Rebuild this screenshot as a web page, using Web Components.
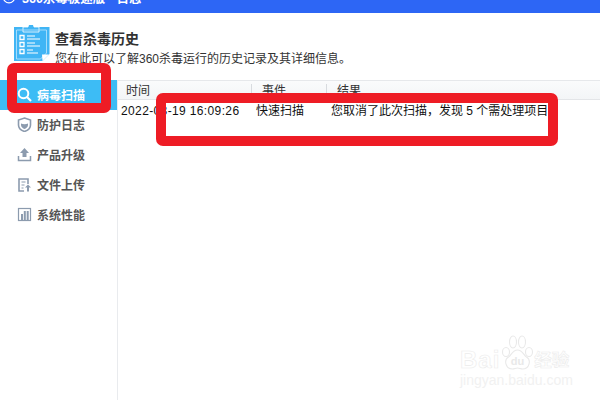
<!DOCTYPE html>
<html>
<head>
<meta charset="utf-8">
<style>
html, body { margin: 0; padding: 0; background: #fff; }
body { width: 600px; height: 400px; overflow: hidden; position: relative; font-family: "Liberation Sans", "Noto Sans CJK SC", sans-serif; }
</style>
</head>
<body>
<log-window>
  <title-bar slot="title">360杀毒极速版 - 日志</title-bar>
  <page-head slot="head"></page-head>
  <side-item slot="side" icon="search" active>病毒扫描</side-item>
  <side-item slot="side" icon="shield">防护日志</side-item>
  <side-item slot="side" icon="upload">产品升级</side-item>
  <side-item slot="side" icon="file">文件上传</side-item>
  <side-item slot="side" icon="chart">系统性能</side-item>
  <log-table slot="main"></log-table>
</log-window>
<red-mark style="left:7px;top:63px;width:104px;height:50px"></red-mark>
<red-mark style="left:156px;top:93px;width:402px;height:53px"></red-mark>
<baidu-mark></baidu-mark>

<script>
class LogWindow extends HTMLElement {
    constructor() {
        super();
        this.attachShadow({mode: 'open'}).innerHTML = `
<style>
:host { display: flex; flex-direction: column; width: 600px; height: 400px; }
.body { display: flex; flex: 1; min-height: 0; }
.side { width: 117px; border-right: 1px solid #e9ebee; flex: none; }
.main { flex: 1; min-width: 0; }
</style>
<slot name="title"></slot>
<slot name="head"></slot>
<div class="body">
    <div class="side"><slot name="side"></slot></div>
    <div class="main"><slot name="main"></slot></div>
</div>`;
    }
}

class TitleBar extends HTMLElement {
    constructor() {
        super();
        // the screenshot cuts the bar off, only the lower part of the caption shows
        this.attachShadow({mode: 'open'}).innerHTML = `
<style>
:host { display: block; height: 13px; background: #2d66f5; overflow: hidden; flex: none; }
.in { display: flex; align-items: center; gap: 6px; height: 20px; margin-top: -13px; padding-left: 2px; color: #fff; font-size: 12.5px; font-weight: bold; white-space: nowrap; }
svg { flex: none; }
</style>
<div class="in">
    <svg width="14" height="14" viewBox="0 0 14 14" fill="none" stroke="#fff" stroke-width="1.2"><circle cx="7" cy="7" r="5.8"/><path d="M4.500 7.500l2 2 3-4.500"/></svg>
    <span><slot></slot></span>
</div>`;
    }
}

class PageHead extends HTMLElement {
    constructor() {
        super();
        this.attachShadow({mode: 'open'}).innerHTML = `
<style>
:host { display: flex; height: 67px; flex: none; box-sizing: border-box; padding: 12px 0 0 13px; gap: 5px; }
.txt { padding-top: 5px; }
svg { flex: none; }
h1 { margin: 0; font-size: 14px; line-height: 18px; font-weight: bold; color: #333; }
p { margin: 3px 0 0; font-size: 12px; line-height: 16px; color: #333; white-space: nowrap; }
</style>
<svg width="37" height="37" viewBox="0 0 37 37">
    <path d="M1 2h35.500v27l-7 7H1z" fill="#40b5f5"/>
    <path d="M10 2h5a3 3 0 0 1 6 0h5v5H10z" fill="#40b5f5" stroke="#fff" stroke-width=".8"/>
    <path d="M3.500 5h30v23l-6 6h-24z" fill="none" stroke="#bfe6fc" stroke-width=".8"/>
    <path d="M7 10.500h4v4H7zM7 17.500h4v4H7zM7 24.500h4v4H7z" fill="none" stroke="#fff" stroke-width="1.300"/>
    <path d="M14 11h8M14 14h13M14 18h8M14 21h13M14 25h6M14 28h11" stroke="#fff" stroke-width="1.200"/>
    <path d="M29 29.500h7l-6.500 6.500z" fill="#fff"/>
</svg>
<div class="txt">
    <h1>查看杀毒历史</h1>
    <p>您在此可以了解360杀毒运行的历史记录及其详细信息。</p>
</div>`;
    }
}

const ICONS = {
    search: '<circle cx="6.500" cy="6.500" r="4.800" fill="none" stroke="#fff" stroke-width="2"/><path d="M10 10l4 4" stroke="#fff" stroke-width="2.200"/>',
    shield: '<path d="M7.500 1l6 2v5c0 3.500-3 5.500-6 6.500-3-1-6-3-6-6.500V3z" fill="none" stroke="#8c9bae" stroke-width="1.600"/><path d="M4 6.500c2 1 5 1 7 0v1.500c0 2-2 3.500-3.500 4-1.500-.5-3.500-2-3.500-4z" fill="#8c9bae"/>',
    upload: '<path d="M7.500 1l4.500 5h-2.500v4h-4V6H3z" fill="#8c9bae"/><path d="M1.500 9v4.500h12V9" fill="none" stroke="#8c9bae" stroke-width="1.500"/>',
    file: '<path d="M11 7V2H2v12h5" fill="none" stroke="#8c9bae" stroke-width="1.600"/><path d="M4.500 5h4M4.500 8h3M4.500 11h2" stroke="#8c9bae" stroke-width="1.200"/><path d="M11 7.500l3 3h-2v4h-2v-4H8z" fill="#8c9bae"/>',
    chart: '<rect x="1.500" y="1.500" width="12" height="12" fill="none" stroke="#8c9bae" stroke-width="1.200"/><path d="M4 7h2v6H4zM6.800 4h2v9h-2zM9.700 4h2v9h-2z" fill="#8c9bae"/>'
};

class SideItem extends HTMLElement {
    constructor() {
        super();
        this.attachShadow({mode: 'open'}).innerHTML = `
<style>
:host { display: flex; align-items: center; gap: 5px; height: 30px; box-sizing: border-box; padding: 0 0 2px 17px; font-size: 12px; font-weight: bold; color: #555; }
:host([active]) { background: #3dbcf5; color: #fff; }
svg { flex: none; }
</style>
<svg width="15" height="15" viewBox="0 0 15 15">${ICONS[this.getAttribute('icon')]}</svg>
<span><slot></slot></span>`;
    }
}

class LogTable extends HTMLElement {
    constructor() {
        super();
        this.attachShadow({mode: 'open'}).innerHTML = `
<style>
:host { display: block; font-size: 12px; color: #111; }
.row { display: grid; grid-template-columns: 134px 75px 1fr; white-space: nowrap; }
.head { height: 20px; box-sizing: border-box; background: linear-gradient(#fafbfc, #f3f5f7); border-top: 1px solid #e6e8eb; border-bottom: 1px solid #e3e5e8; color: #333; }
.head div { padding-left: 10px; border-right: 1px solid #d8dbdf; height: 14px; line-height: 15px; margin-top: 3px; box-sizing: border-box; }
.head div:first-child { padding-left: 8px; }
.head div:last-child { border-right: 0; }
.data { line-height: 16px; padding-top: 3px; }
.data div { padding-left: 4px; }
.data .time { padding-left: 3px; letter-spacing: .37px; }
</style>
<div class="row head"><div>时间</div><div>事件</div><div>结果</div></div>
<div class="row data"><div class="time">2022-03-19 16:09:26</div><div>快速扫描</div><div>您取消了此次扫描，发现 5 个需处理项目</div></div>`;
    }
}

class RedMark extends HTMLElement {
    constructor() {
        super();
        this.attachShadow({mode: 'open'}).innerHTML = `
<style>
:host { display: block; position: absolute; box-sizing: border-box; border: 10px solid #ee1c25; border-radius: 7px; }
</style>`;
    }
}

class BaiduMark extends HTMLElement {
    constructor() {
        super();
        this.attachShadow({mode: 'open'}).innerHTML = `
<style>
:host { display: block; position: absolute; left: 460px; top: 335px; width: 110px; height: 52px; color: #fff; }
.top { display: flex; align-items: flex-end; height: 35px; }
.bai, .kw { font-weight: bold; -webkit-text-stroke: .6px #ececec; line-height: 20px; }
.bai { font-size: 24px; letter-spacing: 1px; }
.kw { font-size: 17.5px; }
svg { flex: none; margin-left: 1px; }
.url { font-size: 14px; line-height: 16px; margin-top: 2px; color: #f1f1f1; white-space: nowrap; }
</style>
<div class="top">
    <span class="bai">Bai</span>
    <svg width="33" height="35" viewBox="0 0 33 35" fill="#fff" stroke="#e9e9e9" stroke-width="1.100">
        <ellipse cx="5" cy="17" rx="3.500" ry="4.500"/><ellipse cx="12" cy="7" rx="3.500" ry="6"/><ellipse cx="21" cy="7" rx="3.500" ry="6"/><ellipse cx="28" cy="17" rx="3.500" ry="4.500"/>
        <path d="M16.500 15c5 0 6 5 9 7 5 3 3 12-4 12-2 0-3-1-5-1s-3 1-5 1c-7 0-9-9-4-12 3-2 4-7 9-7z"/>
        <text x="16.500" y="30" text-anchor="middle" font-size="11" font-weight="bold" fill="#e9e9e9" stroke="none">du</text>
    </svg>
    <span class="kw">经验</span>
</div>
<div class="url">jingyan.baidu.com</div>`;
    }
}

window.customElements.define('log-window', LogWindow)
window.customElements.define('title-bar', TitleBar)
window.customElements.define('page-head', PageHead)
window.customElements.define('side-item', SideItem)
window.customElements.define('log-table', LogTable)
window.customElements.define('red-mark', RedMark)
window.customElements.define('baidu-mark', BaiduMark)
</script>
</body>
</html>
